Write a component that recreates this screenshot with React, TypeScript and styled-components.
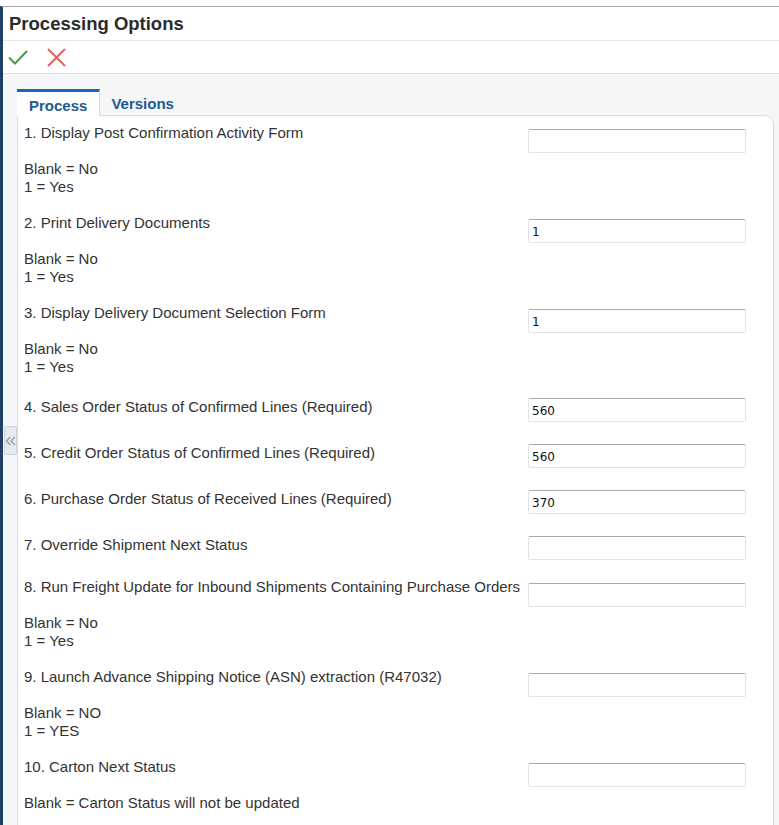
import React from "react";
import styled, { createGlobalStyle } from "styled-components";

const Global = createGlobalStyle`
  html, body { margin: 0; padding: 0; background: #ffffff; }
  body { font-family: "Liberation Sans", Arial, sans-serif; }
  * { box-sizing: border-box; }
`;

const Page = styled.div`
  padding-top: 6px;
  height: 825px;
  overflow: hidden;
`;

const Frame = styled.div`
  position: relative;
  border-top: 1px solid #a9aeb4;
  border-left: 3px solid #1f3f66;
  height: 819px;
  display: flex;
  flex-direction: column;
`;

const TitleBar = styled.div`
  height: 34px;
  display: flex;
  align-items: center;
  padding-left: 6px;
  border-bottom: 1px solid #e3e6e9;
`;

const Title = styled.h1`
  margin: 0;
  font-size: 18.5px;
  font-weight: bold;
  color: #2b2b2b;
`;

const Toolbar = styled.div`
  height: 33px;
  display: flex;
  align-items: center;
  gap: 18px;
  padding-left: 5px;
  border-bottom: 1px solid #dde1e5;
`;

const ToolButton = styled.button`
  border: 0;
  background: none;
  padding: 0;
  width: 20px;
  height: 20px;
  display: flex;
  align-items: center;
  justify-content: center;
  cursor: pointer;
`;

const Body = styled.div`
  flex: 1;
  background: #f5f6f8;
  padding: 15px 5px 0 14px;
  display: flex;
  flex-direction: column;
`;

const TabStrip = styled.div`
  display: flex;
  align-items: flex-end;
  height: 26px;
`;

const Tab = styled.div<{ $active?: boolean }>`
  height: ${(p) => (p.$active ? "27px" : "26px")};
  margin-bottom: ${(p) => (p.$active ? "-1px" : "0")};
  position: relative;
  z-index: 1;
  padding: ${(p) => (p.$active ? "5px 12px 0 12px" : "3px 10px 0 11px")};
  font-size: 15px;
  font-weight: bold;
  color: #1d5a94;
  background: ${(p) => (p.$active ? "#ffffff" : "transparent")};
  border-top: ${(p) => (p.$active ? "3px solid #1769bf" : "3px solid transparent")};
  border-right: ${(p) => (p.$active ? "1px solid #d3dae1" : "0")};
`;

const Panel = styled.div`
  flex: 1;
  background: #ffffff;
  border: 1px solid #d5dce3;
  border-bottom: 0;
  border-top-right-radius: 9px;
  padding: 8px 0 0 6px;
  display: flex;
  flex-direction: column;
  gap: 18px;
`;

const Item = styled.div<{ $plain?: boolean }>`
  display: grid;
  grid-template-columns: 1fr 218px;
  column-gap: 6px;
  padding-right: 27px;
  padding-top: ${(p) => (p.$plain ? "4px" : "0")};
  align-items: start;
`;

const Label = styled.div`
  font-size: 15px;
  line-height: 18px;
  color: #333333;
  white-space: pre-line;
`;

const Field = styled.input<{ $offset?: boolean }>`
  margin-top: ${(p) => (p.$offset ? "5px" : "0")};
  width: 218px;
  height: 24px;
  border: 1px solid #dfe4ea;
  border-top-color: #a7abb0;
  border-radius: 2px;
  padding: 2px 0 0 3px;
  font-family: "DejaVu Sans", "Liberation Sans", sans-serif;
  font-size: 12px;
  color: #111111;
  background: #ffffff;
  outline: none;
`;

const Collapse = styled.div`
  position: absolute;
  left: 1px;
  top: 419px;
  width: 13px;
  height: 29px;
  background: #e7eaee;
  border: 1px solid #cfd5db;
  border-radius: 2px;
  color: #9aa3ad;
  font-size: 20px;
  line-height: 24px;
  text-align: center;
  font-family: "Liberation Sans", sans-serif;
`;

type Opt = { label: string; desc?: string; value: string };

const options: Opt[] = [
  { label: "1. Display Post Confirmation Activity Form", desc: "Blank = No\n1 = Yes", value: "" },
  { label: "2. Print Delivery Documents", desc: "Blank = No\n1 = Yes", value: "1" },
  { label: "3. Display Delivery Document Selection Form", desc: "Blank = No\n1 = Yes", value: "1" },
  { label: "4. Sales Order Status of Confirmed Lines (Required)", value: "560" },
  { label: "5. Credit Order Status of Confirmed Lines (Required)", value: "560" },
  { label: "6. Purchase Order Status of Received Lines (Required)", value: "370" },
  { label: "7. Override Shipment Next Status", value: "" },
  {
    label: "8. Run Freight Update for Inbound Shipments Containing Purchase Orders",
    desc: "Blank = No\n1 = Yes",
    value: "",
  },
  {
    label: "9. Launch Advance Shipping Notice (ASN) extraction (R47032)",
    desc: "Blank = NO\n1 = YES",
    value: "",
  },
  { label: "10. Carton Next Status", desc: "Blank = Carton Status will not be updated", value: "" },
];

const Check = () => (
  <svg width="20" height="17" viewBox="0 0 20 17" fill="none">
    <polyline points="1,8.5 7,14.5 19,2" stroke="#4f9a52" strokeWidth="2" />
  </svg>
);

const Cross = () => (
  <svg width="19" height="19" viewBox="0 0 19 19" fill="none">
    <line x1="1" y1="1" x2="18" y2="18" stroke="#e2605e" strokeWidth="2" />
    <line x1="18" y1="1" x2="1" y2="18" stroke="#e2605e" strokeWidth="2" />
  </svg>
);

export default function App() {
  return (
    <Page>
      <Global />
      <Frame>
        <TitleBar>
          <Title>Processing Options</Title>
        </TitleBar>
        <Toolbar>
          <ToolButton aria-label="OK">
            <Check />
          </ToolButton>
          <ToolButton aria-label="Cancel">
            <Cross />
          </ToolButton>
        </Toolbar>
        <Body>
          <TabStrip>
            <Tab $active>Process</Tab>
            <Tab>Versions</Tab>
          </TabStrip>
          <Panel>
            {options.map((o) => (
              <Item key={o.label} $plain={!o.desc}>
                <Label>{o.desc ? `${o.label}\n\n${o.desc}` : o.label}</Label>
                <Field $offset={!!o.desc} defaultValue={o.value} />
              </Item>
            ))}
          </Panel>
        </Body>
        <Collapse>«</Collapse>
      </Frame>
    </Page>
  );
}
